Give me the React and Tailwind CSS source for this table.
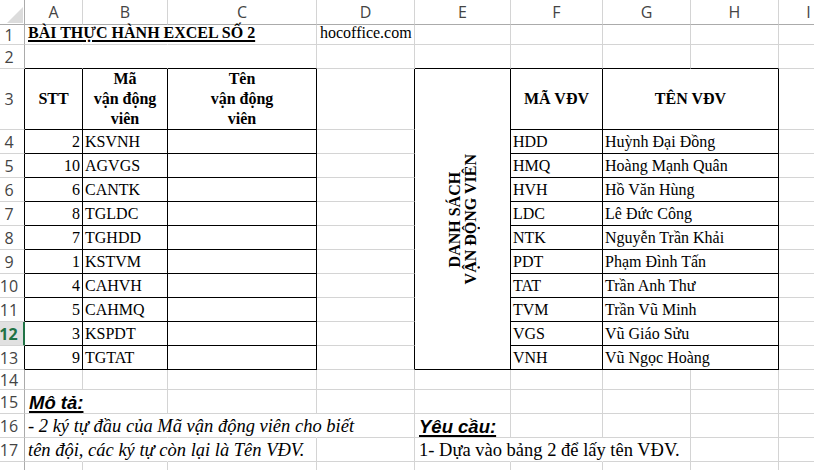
import React from "react";

const serif = "font-['Liberation_Serif','Times_New_Roman',serif]";
const arial = "font-['Liberation_Sans',Arial,sans-serif]";
const ui = "font-['Open_Sans','Segoe_UI',sans-serif]";

const GR = "border-r-[#d4d4d4]";
const KR = "border-r-black";
const TR = "border-r-transparent";
const GB = "border-b-[#d4d4d4]";
const KB = "border-b-black";

const codes = [
  [2, "KSVNH", "HDD", "Huỳnh Đại Đồng"],
  [10, "AGVGS", "HMQ", "Hoàng Mạnh Quân"],
  [6, "CANTK", "HVH", "Hồ Văn Hùng"],
  [8, "TGLDC", "LDC", "Lê Đức Công"],
  [7, "TGHDD", "NTK", "Nguyễn Trần Khải"],
  [1, "KSTVM", "PDT", "Phạm Đình Tấn"],
  [4, "CAHVH", "TAT", "Trần Anh Thư"],
  [5, "CAHMQ", "TVM", "Trần Vũ Minh"],
  [3, "KSPDT", "VGS", "Vũ Giáo Sửu"],
  [9, "TGTAT", "VNH", "Vũ Ngọc Hoàng"],
];

function Cell({ r = GR, b = GB, className = "", children }) {
  return (
    <div className={`border-r border-b ${r} ${b} min-w-0 whitespace-nowrap ${className}`}>
      {children}
    </div>
  );
}

function RowHead({ n, r = "border-r-[#ababab]", selected }) {
  if (selected) {
    return (
      <div className={`flex items-center justify-center pr-[6px] border-b border-b-[#d4d4d4] border-r-2 border-r-[#217346] bg-[#e1e1e1] text-[#217346] font-bold text-[16px] ${ui}`}>
        {n}
      </div>
    );
  }
  return (
    <div className={`flex items-center justify-center pr-[6px] border-r border-b ${r} border-b-[#d4d4d4] text-[#444] text-[16px] ${ui}`}>
      {n}
    </div>
  );
}

const txt = `flex items-end pb-[2px] text-[16px] leading-[18px] text-black ${serif}`;
const big = `flex items-end pb-[1px] text-[18.5px] leading-[20px] text-black ${serif}`;
const label = `flex items-end pb-0 pl-[4px] text-[18.5px] leading-[20px] font-bold italic ${arial}`;

export default function App() {
  const cols = ["A", "B", "C", "D", "E", "F", "G", "H", "I"];
  return (
    <div className="w-[814px] h-[470px] overflow-hidden bg-white">
      <div className="grid grid-cols-[25px_58px_85px_149px_98px_96px_92px_88px_88px_60px] grid-rows-[25px_20px_24px_61px_repeat(10,24px)_20px_24px_24px_24px_24px]">
        {/* column headers */}
        <div className="relative border-r border-b border-r-[#ababab] border-b-[#ababab]">
          <svg className="absolute left-[7px] top-[7px]" width="16" height="16" viewBox="0 0 16 16">
            <polygon points="16,0 16,16 0,16" fill="#dcdcdc" />
          </svg>
        </div>
        {cols.map((c) => (
          <div key={c} className={`flex items-center justify-center border-r border-b border-r-[#d4d4d4] border-b-[#ababab] text-[#444] text-[16px] ${ui}`}>
            {c}
          </div>
        ))}

        {/* row 1 */}
        <RowHead n={1} />
        <Cell r={TR} className={`${txt} text-[15.6px] pl-[3px] font-bold overflow-visible`}>
          <span className="underline decoration-[1.5px] underline-offset-[2px]">BÀI THỰC HÀNH EXCEL SỐ 2</span>
        </Cell>
        <Cell r={TR} />
        <Cell />
        <Cell className={`${txt} pl-[3px] text-[15px]`}>hocoffice.com</Cell>
        <Cell />
        <Cell />
        <Cell />
        <Cell />
        <Cell />

        {/* row 2 */}
        <RowHead n={2} />
        <Cell r={TR} b={KB} />
        <Cell r={TR} b={KB} />
        <Cell b={KB} />
        <Cell />
        <Cell b={KB} />
        <Cell b={KB} />
        <Cell b={KB} />
        <Cell b={KB} />
        <Cell />

        {/* row 3 */}
        <RowHead n={3} r="border-r-black" />
        <Cell r={KR} b={KB} className={`flex items-center justify-center font-bold text-[16px] ${serif}`}>STT</Cell>
        <Cell r={KR} b={KB} className={`flex flex-col items-center justify-center font-bold text-[16px] leading-[20px] ${serif}`}>
          <span>Mã</span>
          <span>vận động</span>
          <span>viên</span>
        </Cell>
        <Cell r={KR} b={KB} className={`flex flex-col items-center justify-center font-bold text-[16px] leading-[20px] ${serif}`}>
          <span>Tên</span>
          <span>vận động</span>
          <span>viên</span>
        </Cell>
        <Cell r={KR} />
        <Cell r={KR} b={KB} className={`row-span-11 flex items-center justify-center font-bold text-[16px] leading-[16px] ${serif}`}>
          <div className="[writing-mode:vertical-rl] rotate-180 text-center">
            DANH SÁCH
            <br />
            VẬN ĐỘNG VIÊN
          </div>
        </Cell>
        <Cell r={KR} b={KB} className={`flex items-center justify-center font-bold text-[16px] ${serif}`}>MÃ VĐV</Cell>
        <Cell r={KR} b={KB} className={`col-span-2 flex items-center justify-center font-bold text-[16px] ${serif}`}>TÊN VĐV</Cell>
        <Cell />

        {/* rows 4-13 */}
        {codes.map(([stt, ma, f, name], i) => (
          <React.Fragment key={ma}>
            <RowHead n={i + 4} r="border-r-black" selected={i + 4 === 12} />
            <Cell r={KR} b={KB} className={`${txt} justify-end pr-[2px]`}>{stt}</Cell>
            <Cell r={KR} b={KB} className={`${txt} pl-[2px]`}>{ma}</Cell>
            <Cell r={KR} b={KB} />
            <Cell r={KR} />
            <Cell r={KR} b={KB} className={`${txt} pl-[2px]`}>{f}</Cell>
            <Cell r={KR} b={KB} className={`${txt} col-span-2 pl-[2px]`}>{name}</Cell>
            <Cell />
          </React.Fragment>
        ))}

        {/* row 14 */}
        <RowHead n={14} />
        {cols.map((c) => <Cell key={c} />)}

        {/* row 15 */}
        <RowHead n={15} />
        <Cell r={TR} className={label}>
          <span className="underline decoration-[1.5px] underline-offset-[2px]">Mô tả:</span>
        </Cell>
        {cols.slice(1).map((c) => <Cell key={c} />)}

        {/* row 16 */}
        <RowHead n={16} />
        <Cell r={TR} className={`${big} pl-[3px] italic`}>- 2 ký tự đầu của Mã vận động viên cho biết</Cell>
        <Cell r={TR} />
        <Cell r={TR} />
        <Cell />
        <Cell className={label}>
          <span className="underline decoration-[1.5px] underline-offset-[2px]">Yêu cầu:</span>
        </Cell>
        <Cell />
        <Cell />
        <Cell />
        <Cell />

        {/* row 17 */}
        <RowHead n={17} />
        <Cell r={TR} className={`${big} pl-[3px] italic`}>tên đội, các ký tự còn lại là Tên VĐV.</Cell>
        <Cell r={TR} />
        <Cell />
        <Cell />
        <Cell r={TR} className={`${big} pl-[4px]`}>1- Dựa vào bảng 2 để lấy tên VĐV.</Cell>
        <Cell r={TR} />
        <Cell />
        <Cell />
        <Cell />

        {/* row 18, cut by the window */}
        <RowHead n="" />
        {cols.map((c) => <Cell key={c} />)}
      </div>
    </div>
  );
}
